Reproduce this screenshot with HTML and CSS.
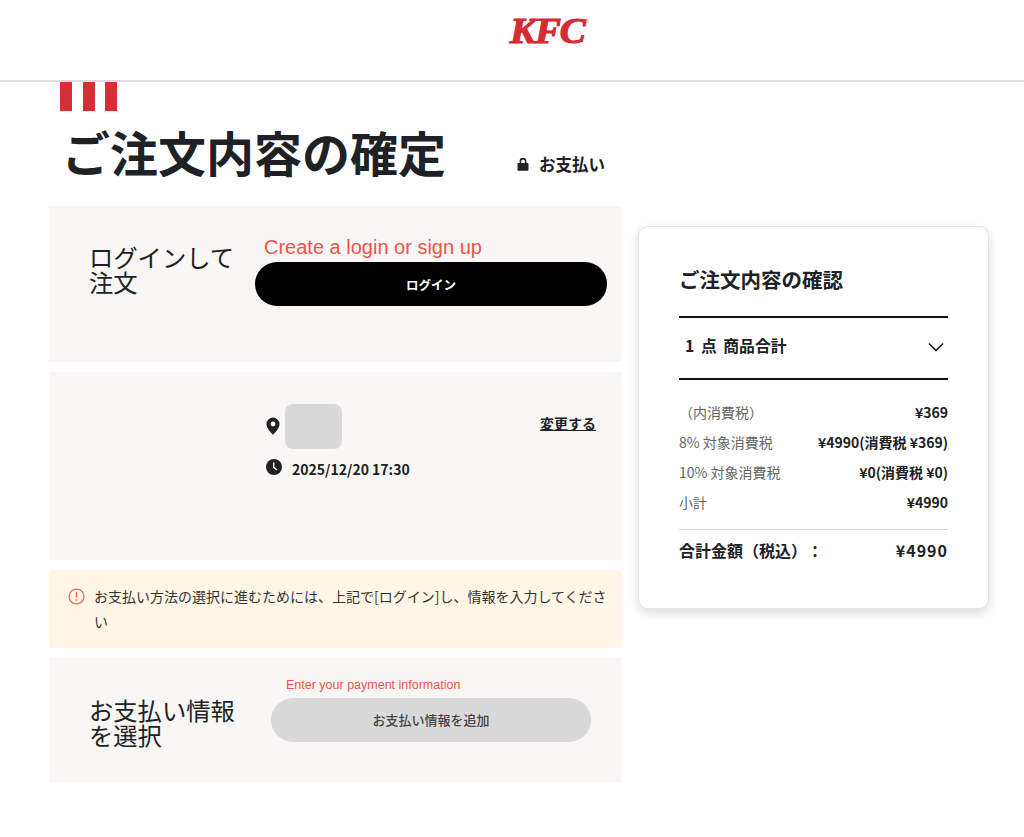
FILE: index.html
```html
<!DOCTYPE html>
<html lang="ja">
<head>
<meta charset="utf-8">
<title>ご注文内容の確定</title>
<link rel="stylesheet" href="styles.css">
</head>
<body>
<header class="site-header"><span class="logo">KFC<sup class="logo-r">®</sup></span></header>
<main class="page">
  <div class="left">
    <div class="stripes"><i></i><i></i><i></i></div>
    <div class="title-row">
      <h1 class="title">ご注文内容の確定</h1>
      <div class="secure">
        <svg class="lock" viewBox="0 0 12 14"><path d="M2.6 6V4.2a3.4 3.4 0 0 1 6.8 0V6h1.1c.6 0 1 .4 1 1v5.8c0 .6-.4 1-1 1H1.500c-.6 0-1-.4-1-1V7c0-.6.4-1 1-1zM4.200 6h3.600V4.200a1.800 1.800 0 0 0-3.600 0z" fill="#202124" fill-rule="evenodd"/></svg>
        <span>お支払い</span>
      </div>
    </div>

    <section class="card login-card">
      <h2 class="card-heading">ログインして注文</h2>
      <div class="login-body">
        <p class="hint-large">Create a login or sign up</p>
        <button class="pill pill-black">ログイン</button>
      </div>
    </section>

    <section class="card store-card">
      <div class="store-info">
        <div class="store-row">
          <svg class="pin" viewBox="0 0 14 18"><path d="M7 .5a6.500 6.500 0 0 0-6.500 6.500c0 4.300 5 9.400 6.500 10.800 1.500-1.400 6.500-6.500 6.500-10.800A6.500 6.500 0 0 0 7 .5zm0 8.900a2.400 2.400 0 1 1 0-4.800 2.400 2.400 0 0 1 0 4.800z" fill="#202124" fill-rule="evenodd"/></svg>
          <div class="redacted"></div>
        </div>
        <div class="time-row">
          <svg class="clock" viewBox="0 0 16 16"><circle cx="8" cy="8" r="8" fill="#202124"/><path d="M7.700 3.500v4.800l3.300 2.700" fill="none" stroke="#f8f7f5" stroke-width="1.500"/></svg>
          <span class="time-text">2025/12/20 17:30</span>
        </div>
      </div>
      <a class="change" href="#">変更する</a>
    </section>

    <section class="notice">
      <svg class="alert" viewBox="0 0 16 16"><circle cx="8" cy="8" r="7" fill="none" stroke="#ee6a62" stroke-width="1.200"/><path d="M8 3.800v5.200" stroke="#ee6a62" stroke-width="1.300"/><circle cx="8" cy="11.400" r=".9" fill="#ee6a62"/></svg>
      <p class="notice-text">お支払い方法の選択に進むためには、上記で[ログイン]し、情報を入力してください</p>
    </section>

    <section class="card pay-card">
      <h2 class="card-heading pay-heading">お支払い情報を選択</h2>
      <div class="pay-body">
        <p class="hint-small">Enter your payment information</p>
        <button class="pill pill-grey">お支払い情報を追加</button>
      </div>
    </section>
  </div>

  <aside class="summary">
    <h2 class="summary-title">ご注文内容の確認</h2>
    <div class="count-row">
      <span class="count-label">1 点 商品合計</span>
      <svg class="chevron" viewBox="0 0 16 10"><path d="M1 1.500l7 7 7-7" fill="none" stroke="#202124" stroke-width="1.700"/></svg>
    </div>
    <dl class="rows">
      <div class="row"><dt>（内消費税）</dt><dd>¥369</dd></div>
      <div class="row"><dt>8% 対象消費税</dt><dd>¥4990(消費税 ¥369)</dd></div>
      <div class="row"><dt>10% 対象消費税</dt><dd>¥0(消費税 ¥0)</dd></div>
      <div class="row"><dt>小計</dt><dd>¥4990</dd></div>
    </dl>
    <div class="total"><span>合計金額（税込）：</span><span class="total-price">¥4990</span></div>
  </aside>
</main>
</body>
</html>
```
FILE: styles.css
```css
* { box-sizing: border-box; }
html, body { margin: 0; padding: 0; }
body {
  background: #fff;
  color: #202124;
  font-family: "Noto Sans CJK JP", "Noto Sans", sans-serif;
  text-spacing-trim: space-all;
  height: 837px;
  overflow: hidden;
}
h1, h2, p, dl, dd, dt { margin: 0; }

.site-header {
  height: 82px;
  border-bottom: 2px solid #dedede;
  display: flex;
  justify-content: center;
  padding-top: 10px;
  padding-left: 74px;
}
.logo {
  font-family: "Liberation Serif", serif;
  font-weight: 700;
  font-style: italic;
  font-size: 36px;
  line-height: 42px;
  height: 42px;
  letter-spacing: -1px;
  color: #d62b33;
  -webkit-text-stroke: 1.200px #d62b33;
  transform: scaleX(1.08);
}
.logo-r {
  font-size: 6px;
  font-style: normal;
  -webkit-text-stroke: 0;
  vertical-align: 20px;
  line-height: 0;
  color: #c98;
}

.page {
  display: flex;
  align-items: flex-start;
  gap: 16px;
  padding-left: 49px;
}
.left { width: 573px; flex: none; }

.stripes { display: flex; gap: 10.500px; padding-left: 11px; height: 29px; }
.stripes i { width: 12px; background: #d62f38; }

.title-row {
  height: 95px;
  display: flex;
  padding-left: 13px;
  padding-top: 7px;
}
.title {
  font-size: 48px;
  line-height: 66px;
  font-weight: 700;
  white-space: nowrap;
}
.secure {
  display: flex;
  align-items: center;
  gap: 10px;
  margin-left: 71px;
  margin-top: 31px;
  height: 30px;
  font-size: 16.500px;
  font-weight: 700;
}
.lock { width: 12px; height: 14px; flex: none; }

.card { background: #f8f7f5; display: flex; }
.card-heading {
  font-size: 24.300px;
  line-height: 25px;
  font-weight: 400;
  flex: none;
}

.login-card { height: 156px; margin-bottom: 10px; padding: 29px 15px 0 40px; }
.login-card .card-heading { width: 166px; padding-top: 9px; }
.login-body { width: 352px; }
.hint-large {
  font-family: "Liberation Sans", sans-serif;
  font-size: 20px;
  line-height: 24px;
  color: #f0524a;
  padding-left: 9px;
  white-space: nowrap;
}
.pill {
  display: block;
  height: 44px;
  border: 0;
  border-radius: 22px;
  font-family: inherit;
  font-size: 13px;
  padding: 0;
}
.pill-black { width: 352px; margin-top: 3px; background: #000; color: #fff; font-weight: 700; font-size: 12.500px; }
.pill-grey { width: 320px; background: #d9d9d9; color: #444; font-weight: 500; padding-bottom: 2px; }

.store-card {
  height: 188px;
  margin-bottom: 10px;
  padding: 32px 26px 0 217px;
  justify-content: space-between;
}
.store-row { display: flex; gap: 5px; align-items: flex-start; }
.pin { width: 14px; height: 18px; margin-top: 13px; }
.redacted { width: 57px; height: 45px; border-radius: 8px; background: #d9d9d9; }
.time-row { display: flex; gap: 10px; margin-top: 8px; }
.clock { width: 16px; height: 16px; margin-top: 2px; flex: none; }
.time-text { font-size: 14px; line-height: 22px; font-weight: 700; margin-top: 1px; }
.change {
  font-size: 14px;
  line-height: 20px;
  font-weight: 700;
  color: #202124;
  margin-top: 9px;
  text-decoration: underline;
}

.notice {
  height: 78px;
  margin-bottom: 10px;
  background: #fff6e5;
  border-radius: 4px;
  display: flex;
  padding: 14px 15px 0 19px;
  gap: 9px;
}
.alert { width: 17px; height: 17px; margin-top: 4px; flex: none; }
.notice-text { font-size: 14px; line-height: 25px; color: #333; }

.pay-card { height: 124px; padding: 16px 31px 0 40px; }
.pay-heading { width: 182px; padding-top: 23px; padding-right: 22px; }
.hint-small {
  font-family: "Liberation Sans", sans-serif;
  font-size: 12.500px;
  line-height: 22px;
  color: #f0524a;
  padding-left: 15px;
  white-space: nowrap;
}
.pay-body .pill-grey { margin-top: 2px; }

.summary {
  width: 351px;
  flex: none;
  height: 383px;
  margin-top: 144px;
  background: #fff;
  border: 1px solid #e4e4e4;
  border-radius: 10px;
  box-shadow: 0 4px 10px rgba(0, 0, 0, 0.14);
  padding: 37px 40px 0 40px;
}
.summary-title { font-size: 20.500px; line-height: 30px; font-weight: 700; white-space: nowrap; }
.count-row {
  margin-top: 22px;
  height: 64px;
  border-top: 2px solid #111;
  border-bottom: 2px solid #111;
  display: flex;
  justify-content: space-between;
  align-items: center;
  padding: 0 4px 6px 6px;
}
.count-label { font-size: 15.800px; font-weight: 700; word-spacing: 3px; }
.chevron { width: 16px; height: 10px; margin-top: 4px; }
.rows { padding-top: 17px; padding-bottom: 12px; border-bottom: 1px solid #d8d8d8; }
.row {
  display: flex;
  justify-content: space-between;
  height: 30px;
  line-height: 30px;
  font-size: 14px;
}
.row dt { color: #666; }
.row dd { font-weight: 700; }
.total {
  display: flex;
  justify-content: space-between;
  font-size: 16px;
  font-weight: 700;
  line-height: 24px;
  margin-top: 8px;
}
.total-price { letter-spacing: 1px; }
```
